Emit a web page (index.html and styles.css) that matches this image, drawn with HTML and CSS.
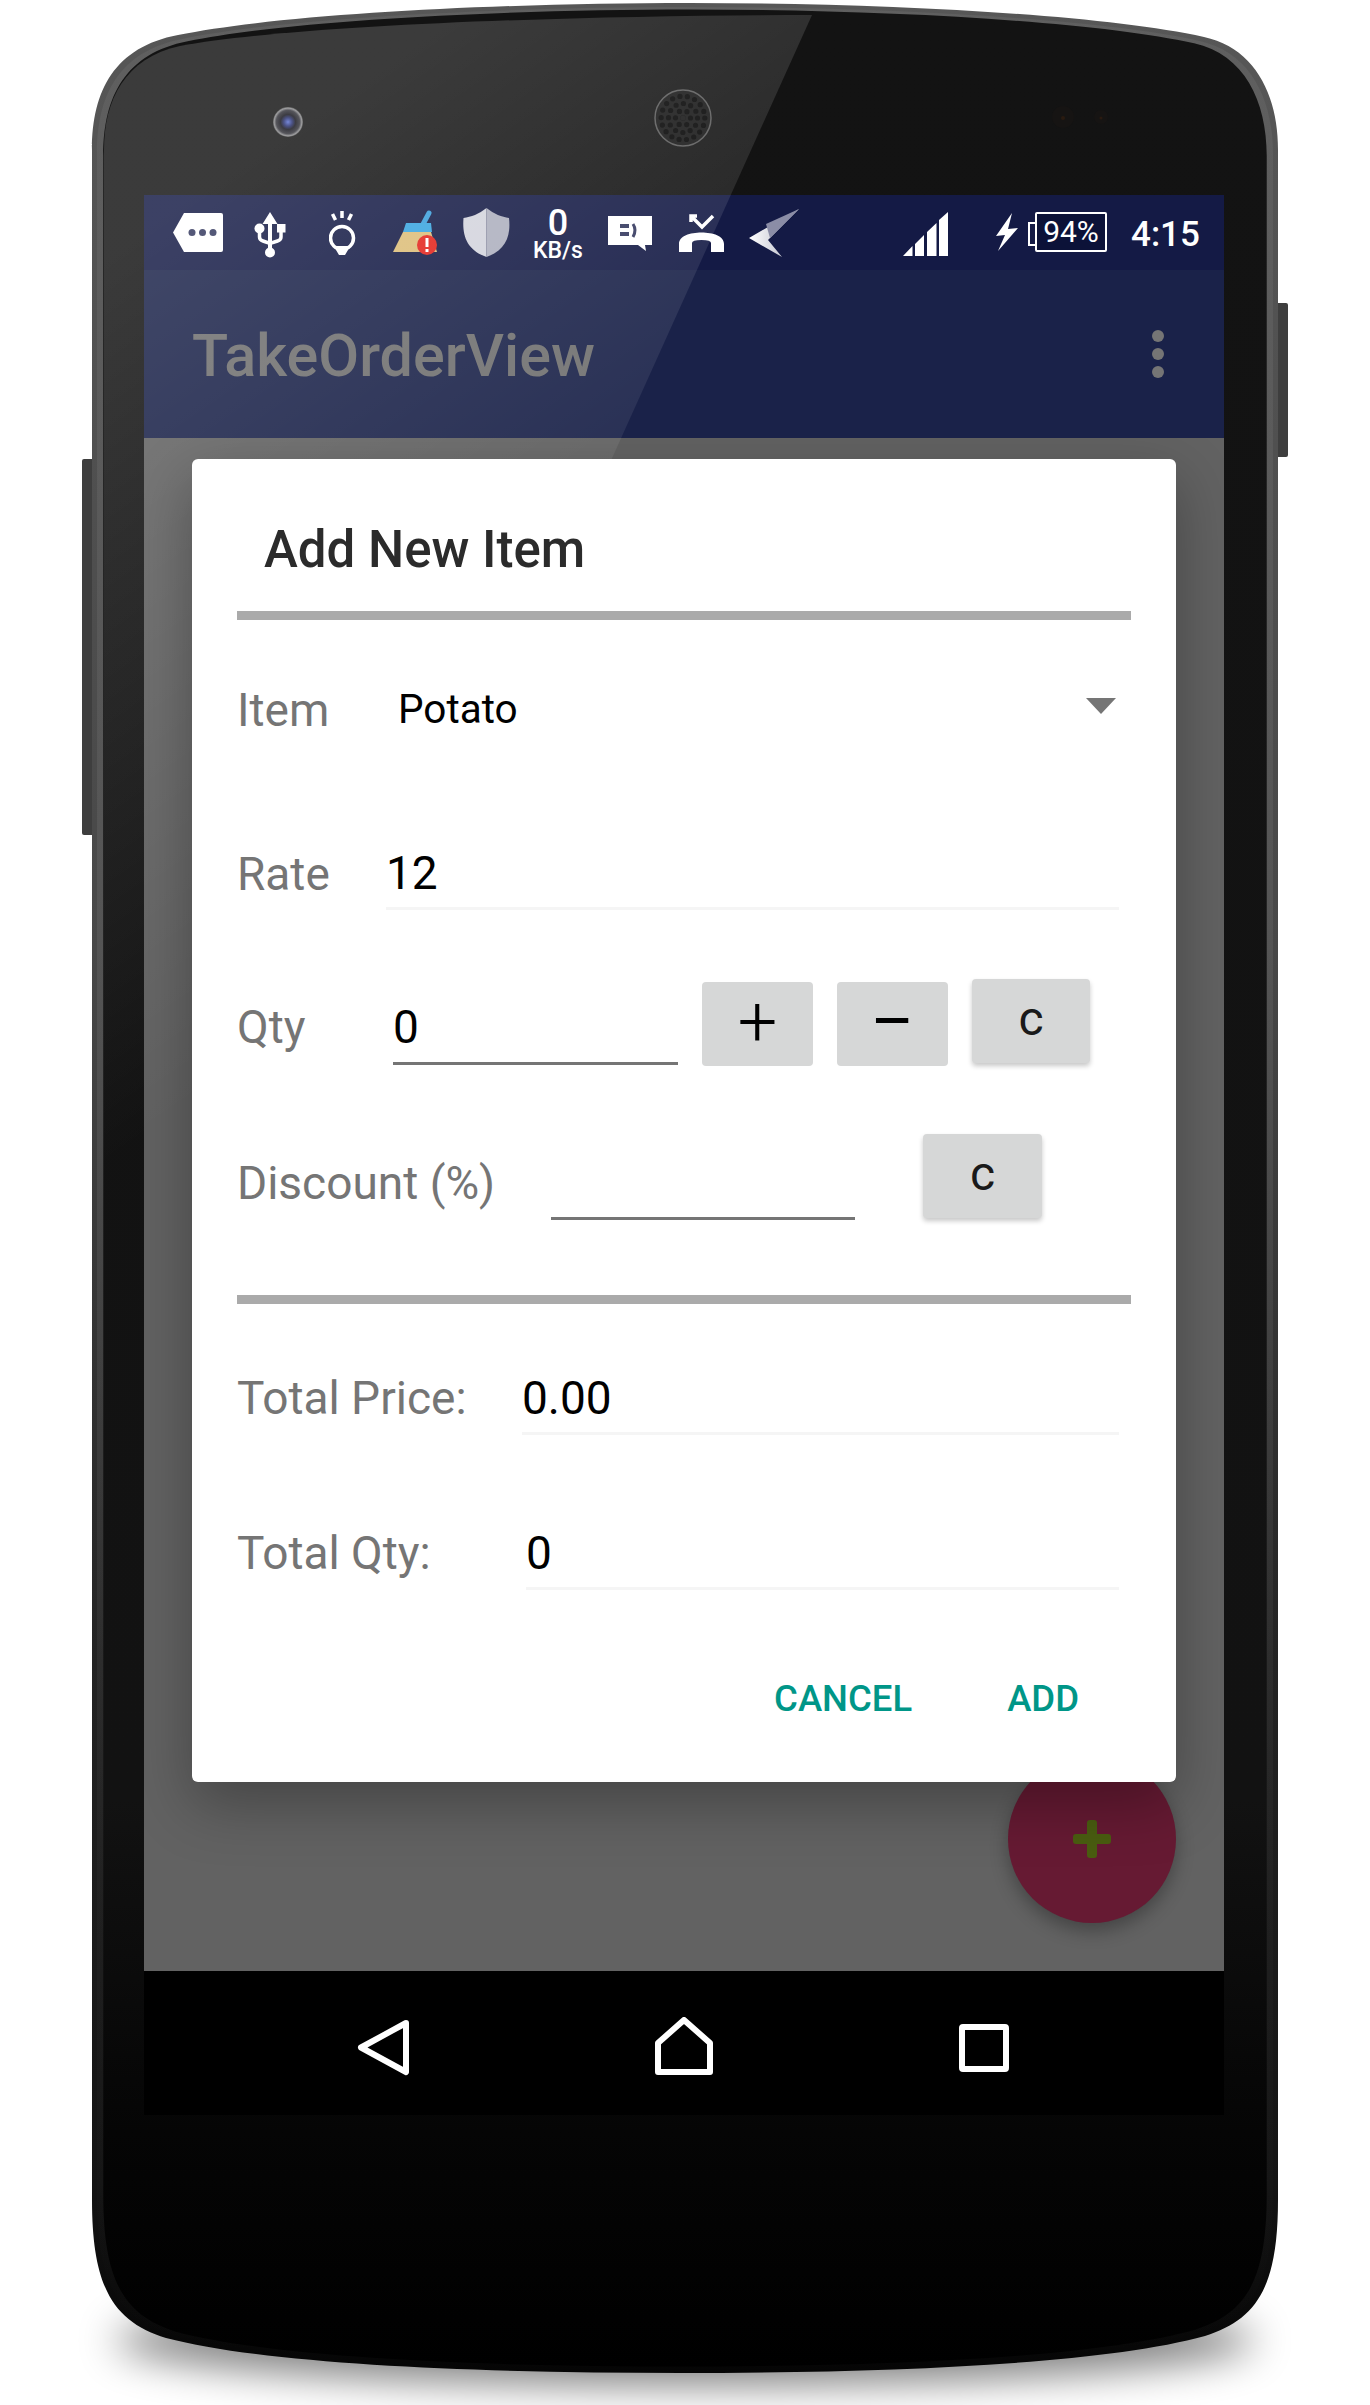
FILE: index.html
```html
<!DOCTYPE html>
<html lang="en">
<head>
<meta charset="utf-8">
<title>TakeOrderView</title>
<link rel="stylesheet" href="styles.css">
</head>
<body>
<div class="phone">
  <svg class="shell" viewBox="0 0 1370 2405" width="1370" height="2405" aria-hidden="true">
    <defs>
      <linearGradient id="edge" x1="0" y1="0" x2="0" y2="1">
        <stop offset="0" stop-color="#575757"/><stop offset=".4" stop-color="#484848"/>
        <stop offset=".7" stop-color="#232323"/><stop offset=".92" stop-color="#141414"/><stop offset="1" stop-color="#050505"/>
      </linearGradient>
      <linearGradient id="rimlight" x1="0" y1="0" x2="0" y2="1">
        <stop offset="0" stop-color="#6a6a6a" stop-opacity=".45"/><stop offset=".45" stop-color="#6a6a6a" stop-opacity=".35"/>
        <stop offset=".8" stop-color="#6a6a6a" stop-opacity=".06"/><stop offset="1" stop-color="#6a6a6a" stop-opacity="0"/>
      </linearGradient>
      <linearGradient id="face" x1="0" y1="0" x2="0" y2="1">
        <stop offset="0" stop-color="#131313"/><stop offset=".76" stop-color="#121212"/>
        <stop offset=".9" stop-color="#050505"/><stop offset="1" stop-color="#000"/>
      </linearGradient>
      <radialGradient id="lens">
        <stop offset="0" stop-color="#5a6fd0"/><stop offset=".28" stop-color="#27306e"/><stop offset=".5" stop-color="#14141c"/>
        <stop offset=".78" stop-color="#33333a"/><stop offset=".92" stop-color="#8a8a8c"/><stop offset="1" stop-color="#4a4a4a"/>
      </radialGradient>
      <filter id="soft" x="-20%" y="-150%" width="140%" height="400%"><feGaussianBlur stdDeviation="20"/></filter>
      <path id="body" d="M92 150C92 90 115 47 178 35C280 14 500 3 690 3C880 3 1100 14 1204 37C1255 48 1278 95 1278 150L1278 2200C1278 2290 1255 2320 1205 2336C1100 2365 880 2373 680 2373C480 2373 270 2365 166 2338C115 2322 92 2290 92 2200Z"/>
    </defs>
    <ellipse class="ground" cx="685" cy="2340" rx="570" ry="45" filter="url(#soft)"/>
    <rect class="key" x="82" y="459" width="20" height="376" rx="2"/>
    <rect class="key" x="1268" y="303" width="20" height="154" rx="2"/>
    <use href="#body" fill="url(#edge)"/>
    <use href="#body" fill="url(#rimlight)" transform="translate(685 1188) scale(.9915 .9966) translate(-685 -1188)"/>
    <use href="#body" fill="url(#face)" transform="translate(685 1188) scale(.981 .9945) translate(-685 -1188)"/>
    <circle cx="288" cy="122" r="15" fill="url(#lens)"/>
    <circle class="grille" cx="683" cy="118" r="28"/>
    <circle class="holes" cx="683" cy="118" r="0.1"/>
    <circle class="holes" cx="683" cy="118" r="7.5" stroke-dasharray="0 7.854"/>
    <circle class="holes" cx="683" cy="118" r="14.5" stroke-dasharray="0 7.592"/>
    <circle class="holes" cx="683" cy="118" r="21.8" stroke-dasharray="0 7.61"/>
    <circle class="sensor" cx="1063" cy="117" r="11"/><circle class="sensor-dot" cx="1063" cy="118" r="2"/>
    <circle class="sensor" cx="1101" cy="117" r="7"/><circle class="sensor-dot" cx="1101" cy="118" r="1.5"/>
  </svg>

  <main class="screen">
    <div class="status-bar">
      <svg class="si si-tag" viewBox="173 207 50 52" aria-hidden="true"><path class="w" d="M173 232.500L184 213H221Q223 213 223 215V250Q223 252 221 252H184Z"/><circle class="d" cx="192" cy="232.500" r="3.500"/><circle class="d" cx="202.500" cy="232.500" r="3.500"/><circle class="d" cx="213" cy="232.500" r="3.500"/></svg>
      <svg class="si si-usb" viewBox="254 207 32 52" aria-hidden="true"><path class="w" d="M270 212L277.500 224H272V248H268V224H262.500Z"/><circle class="w" cx="270" cy="252.500" r="5"/><circle class="w" cx="259.500" cy="228.500" r="5"/><rect class="w" x="277" y="224" width="8.500" height="8.500"/><path class="ws" d="M259.500 231V237Q259.500 240 263 241L270 243.500L277.500 241Q281 240 281 237V231"/></svg>
      <svg class="si si-bulb" viewBox="329 207 27 52" aria-hidden="true"><circle class="ws" cx="342" cy="238" r="11.500"/><path class="w" d="M336 246H348V250L345 255H339L336 250Z"/><path class="ws" d="M342 211V218M332.500 214L335.500 220M351.500 214L348.500 220"/></svg>
      <svg class="si si-broom" viewBox="393 207 45 52" aria-hidden="true"><path class="broom-handle" d="M429 213L421 228"/><path class="broom-band" d="M406 223H431L432 232H403Z"/><path class="broom-hair" d="M403 232H431L437 252H393Q397 244 403 232Z"/><circle class="badge" cx="427" cy="245" r="10"/><rect class="w" x="425.500" y="238" width="3" height="9"/><rect class="w" x="425.500" y="249" width="3" height="3"/></svg>
      <svg class="si si-shield" viewBox="463 207 47 52" aria-hidden="true"><path class="sh-l" d="M486.500 208C479 214 471 217 463.500 218C462 236 467 250 486.500 257Z"/><path class="sh-r" d="M486.500 208C494 214 502 217 509 218C511 236 506 250 486.500 257Z"/></svg>
      <div class="speed"><span class="speed-val">0</span><span class="speed-unit">KB/s</span></div>
      <svg class="si si-chat" viewBox="608 207 44 52" aria-hidden="true"><path class="w" d="M608 216H652V245H645L646 251L638 245H608Z"/><path class="d" d="M620 224H629V228H620ZM620 232H629V236H620Z"/><path class="ds" d="M633 224Q637 230 633 237"/></svg>
      <svg class="si si-call" viewBox="679 207 46 52" aria-hidden="true"><path class="w" d="M679 252V244C679 236 690 232.500 701.500 232.500C713 232.500 724 236 724 244V252H711V243Q711 240 701.500 240Q692 240 692 243V252Z"/><path class="ws" d="M697 216H691V222M691 216L702 227L713 216"/></svg>
      <svg class="si si-plane" viewBox="749 207 51 52" aria-hidden="true"><defs><linearGradient id="pl" x1="0" y1="0" x2="1" y2="0"><stop offset="0" stop-color="#fff"/><stop offset="1" stop-color="#aaacbc"/></linearGradient></defs><path fill="url(#pl)" d="M749 238L799 209L768 240L782 257Z"/><path class="pl-top" d="M799 209L766 224L770 238Z"/></svg>
      <svg class="si si-signal" viewBox="903 207 45 52" aria-hidden="true"><path class="w" d="M903 256L912.500 246V256ZM915 244L924 235V256H915ZM927 232L936.500 223V256H927ZM939 220L948 212V256H939Z"/></svg>
      <svg class="si si-bolt" viewBox="996 207 22 52" aria-hidden="true"><path class="w" d="M1012 213L996 236L1005 235L998 251L1018 228L1008 229Z"/></svg>
      <div class="battery">94%</div>
      <span class="clock">4:15</span>
    </div>

    <header class="app-bar">
      <h1 class="app-title">TakeOrderView</h1>
      <div class="overflow-menu"><i></i><i></i><i></i></div>
    </header>

    <div class="content">
      <section class="dialog">
        <h2 class="dialog-title">Add New Item</h2>
        <div class="rule"></div>

        <div class="row row-item">
          <span class="label label-rate">Item</span>
          <span class="spinner-value">Potato</span>
          <span class="spinner-arrow"></span>
        </div>

        <div class="row row-rate">
          <span class="label label-rate">Rate</span>
          <span class="field field-soft field-grow">12</span>
        </div>

        <div class="row row-qty">
          <span class="label label-qty push">Qty</span>
          <span class="field field-strong field-qty push">0</span>
          <button class="btn btn-flat btn-plus" type="button">+</button>
          <button class="btn btn-flat btn-minus" type="button">–</button>
          <button class="btn btn-raised btn-c-qty" type="button">c</button>
        </div>

        <div class="row row-disc">
          <span class="label label-disc push">Discount (%)</span>
          <span class="field field-strong field-disc push"></span>
          <button class="btn btn-raised btn-c-disc" type="button">c</button>
        </div>

        <div class="rule rule-2"></div>

        <div class="row row-price">
          <span class="label label-price">Total Price:</span>
          <span class="field field-soft field-grow field-tall">0.00</span>
        </div>

        <div class="row row-total">
          <span class="label label-total">Total Qty:</span>
          <span class="field field-soft field-grow">0</span>
        </div>

        <div class="actions">
          <span class="action">CANCEL</span>
          <span class="action">ADD</span>
        </div>
      </section>

      <div class="fab"><span class="fab-h"></span><span class="fab-v"></span></div>
    </div>

    <nav class="nav-bar">
      <svg class="nav-icon" viewBox="0 0 60 60" aria-hidden="true"><path d="M52 6L7 30.500L52 55Z"/></svg>
      <svg class="nav-icon" viewBox="0 0 60 60" aria-hidden="true"><path d="M30 3L4 26V55H56V26Z"/></svg>
      <svg class="nav-icon" viewBox="0 0 60 60" aria-hidden="true"><rect x="8" y="10" width="44" height="42" rx="1"/></svg>
    </nav>
  </main>

  <svg class="gloss" viewBox="0 0 1370 2405" width="1370" height="2405" aria-hidden="true">
    <defs>
      <linearGradient id="gl" gradientUnits="userSpaceOnUse" x1="50" y1="294" x2="476" y2="914">
        <stop offset="0" stop-color="#fff" stop-opacity=".17"/><stop offset="1" stop-color="#fff" stop-opacity="0"/>
      </linearGradient>
    </defs>
    <path fill="url(#gl)" d="M812 15L104 1584V150C104 100 125 58 180 46C300 24 600 15 812 15Z"/>
  </svg>
</div>
</body>
</html>
```

FILE: styles.css
```css
* { box-sizing: border-box; }
html, body { margin: 0; padding: 0; background: #fff; }
body { font-family: Roboto, "Noto Sans", sans-serif; }

.phone {
  position: relative;
  isolation: isolate;
  width: 1370px;
  height: 2405px;
  padding: 195px 146px 290px 144px;
  overflow: hidden;
}
.shell { position: absolute; left: 0; top: 0; z-index: -1; }
.gloss { position: absolute; left: 0; top: 0; z-index: 1; pointer-events: none; }

.ground { fill: #000; opacity: .5; }
.key { fill: #3e3e3e; }
.grille { fill: #161616; stroke: #5a5a5a; stroke-width: 1.5; }
.holes { fill: none; stroke: #030303; stroke-width: 5.2; stroke-linecap: round; }
.sensor { fill: #161413; }
.sensor-dot { fill: #2a1a10; }

.screen {
  display: flex;
  flex-direction: column;
  width: 1080px;
  height: 1920px;
}

/* status bar */
.status-bar {
  display: flex;
  align-items: flex-start;
  flex: 0 0 75px;
  padding: 12px 0 0 29px;
  background: #141a45;
  color: #fff;
}
.si { display: block; height: 52px; flex: none; }
.si .w, .w { fill: #fff; }
.ws { fill: none; stroke: #fff; stroke-width: 3.500; }
.d { fill: #33385e; }
.ds { fill: none; stroke: #33385e; stroke-width: 3; }
.si-tag { width: 50px; }
.si-usb { width: 32px; margin-left: 31px; }
.si-bulb { width: 27px; margin-left: 43px; }
.si-broom { width: 45px; margin-left: 37px; }
.si-shield { width: 47px; margin-left: 25px; }
.si-chat { width: 44px; margin-left: 24px; }
.si-call { width: 46px; margin-left: 27px; }
.si-plane { width: 51px; margin-left: 24px; }
.si-signal { width: 45px; margin-left: 103px; }
.si-bolt { width: 22px; margin-left: 48px; }
.broom-handle { fill: none; stroke: #3a9fdc; stroke-width: 5; stroke-linecap: round; }
.broom-band { fill: #38a5e0; }
.broom-hair { fill: #dcbd78; }
.badge { fill: #e3231b; }
.sh-l { fill: #d3d4dd; }
.sh-r { fill: #adafbe; }
.pl-top { fill: #8b8da6; }

.speed {
  display: flex;
  flex-direction: column;
  align-items: center;
  width: 52px;
  margin: -2px 0 0 22px;
  font-weight: 500;
}
.speed-val { font-size: 36px; line-height: 36px; }
.speed-unit { font-size: 23px; line-height: 20px; }

.battery {
  position: relative;
  width: 72px;
  height: 40px;
  margin: 5px 0 0 17px;
  border: 2.500px solid #fff;
  border-radius: 2px;
  background: #0c1238;
  font-size: 30px;
  line-height: 35px;
  text-align: center;
}
.battery::before {
  content: "";
  position: absolute;
  left: -9px;
  top: 8px;
  width: 7px;
  height: 20px;
  border: 2.500px solid #fff;
  border-right: 0;
}
.clock {
  margin: 0 0 0 24px;
  font-size: 35px;
  line-height: 56px;
  font-weight: 500;
}

/* app bar */
.app-bar {
  display: flex;
  align-items: center;
  justify-content: space-between;
  flex: 0 0 168px;
  padding: 3px 60px 0 48px;
  background: #1a2249;
}
.app-title {
  margin: 0;
  font-size: 59.300px;
  font-weight: 500;
  line-height: 78px;
  color: #6f6f6f;
}
.overflow-menu { display: flex; flex-direction: column; gap: 6px; margin-top: -3px; }
.overflow-menu i { display: block; width: 12px; height: 12px; border-radius: 50%; background: #757575; }

/* content + dialog */
.content {
  position: relative;
  flex: 1 1 auto;
  background: #626262;
  overflow: hidden;
  padding: 21px 48px 0;
}
.dialog {
  position: relative;
  z-index: 2;
  width: 984px;
  padding: 0 45px 53px;
  background: #fff;
  border-radius: 6px;
  box-shadow: 0 22px 60px rgba(0, 0, 0, .3);
}
.dialog-title {
  margin: 0 0 31px;
  padding: 61px 0 0 27px;
  font-size: 51px;
  line-height: 60px;
  font-weight: 500;
  color: #2b2b2b;
}
.rule { height: 9px; background: #aaa; }
.rule-2 { margin-top: 75px; }

.row { display: flex; align-items: flex-start; padding-right: 12px; }
.row-item { margin-top: 60px; }
.row-rate { margin-top: 104px; }
.row-qty { margin-top: 69px; }
.row-disc { margin-top: 68px; }
.row-price { margin-top: 64px; }
.row-total { margin-top: 89px; }
.row-total .label { line-height: 58px; }

.label {
  flex: none;
  font-size: 46px;
  line-height: 60px;
  color: #757575;
}
.label-rate { width: 149px; }
.label-qty { width: 156px; }
.label-disc { width: 314px; }
.label-price { width: 285px; }
.label-total { width: 289px; }
.push { margin-top: 18px; }
.row-disc .push { margin-top: 19px; }

.spinner-value {
  margin-left: 12px;
  font-size: 40.500px;
  line-height: 58px;
  color: #000;
}
.spinner-arrow {
  width: 0;
  height: 0;
  margin: 18px 3px 0 auto;
  border-left: 15px solid transparent;
  border-right: 15px solid transparent;
  border-top: 16px solid #757575;
}

.field {
  display: block;
  font-size: 46px;
  line-height: 58px;
  color: #000;
  padding-bottom: 5px;
}
.field-soft { border-bottom: 3px solid #f5f5f5; }
.field-strong { border-bottom: 3px solid #757575; line-height: 60px; }
.field-grow { flex: 1 1 auto; }
.field-tall { line-height: 60px; padding-bottom: 4px; }
.field-qty { width: 285px; }
.field-disc { width: 304px; height: 67px; padding-bottom: 4px; }

.btn {
  flex: none;
  display: block;
  height: 84px;
  padding: 0 0 4px;
  border: 0;
  border-radius: 4px;
  background: #d6d7d7;
  font-family: Roboto, sans-serif;
  font-size: 48px;
  line-height: 80px;
  color: #1a1a1a;
}
.btn-flat { width: 111px; margin-top: 3px; color: #000; }
.btn-plus { margin-left: 24px; font-size: 70px; font-weight: 300; }
.btn-minus { margin-left: 24px; font-size: 66px; }
.btn-raised { box-shadow: 0 3px 5px rgba(0, 0, 0, .22); }
.btn-c-qty { width: 118px; margin-left: 24px; }
.btn-c-disc { width: 119px; margin-left: 68px; }

.actions {
  display: flex;
  justify-content: flex-end;
  gap: 95px;
  margin: 79px 52px 0 0;
}
.action {
  font-size: 36.500px;
  line-height: 60px;
  font-weight: 500;
  color: #009688;
}

.fab {
  position: absolute;
  left: 864px;
  top: 1317px;
  width: 168px;
  height: 168px;
  border-radius: 50%;
  background: #661a33;
  box-shadow: 0 8px 18px rgba(0, 0, 0, .3);
}
.fab-h, .fab-v { position: absolute; background: #4a5d10; border-radius: 3px; }
.fab-h { left: 65px; top: 79px; width: 38px; height: 10px; }
.fab-v { left: 79px; top: 65px; width: 10px; height: 38px; }

/* navigation bar */
.nav-bar {
  display: flex;
  align-items: center;
  justify-content: center;
  gap: 240px;
  flex: 0 0 144px;
  padding-top: 8px;
  background: #000;
}
.nav-icon { width: 60px; height: 60px; fill: none; stroke: #fff; stroke-width: 6; stroke-linejoin: round; }
```
